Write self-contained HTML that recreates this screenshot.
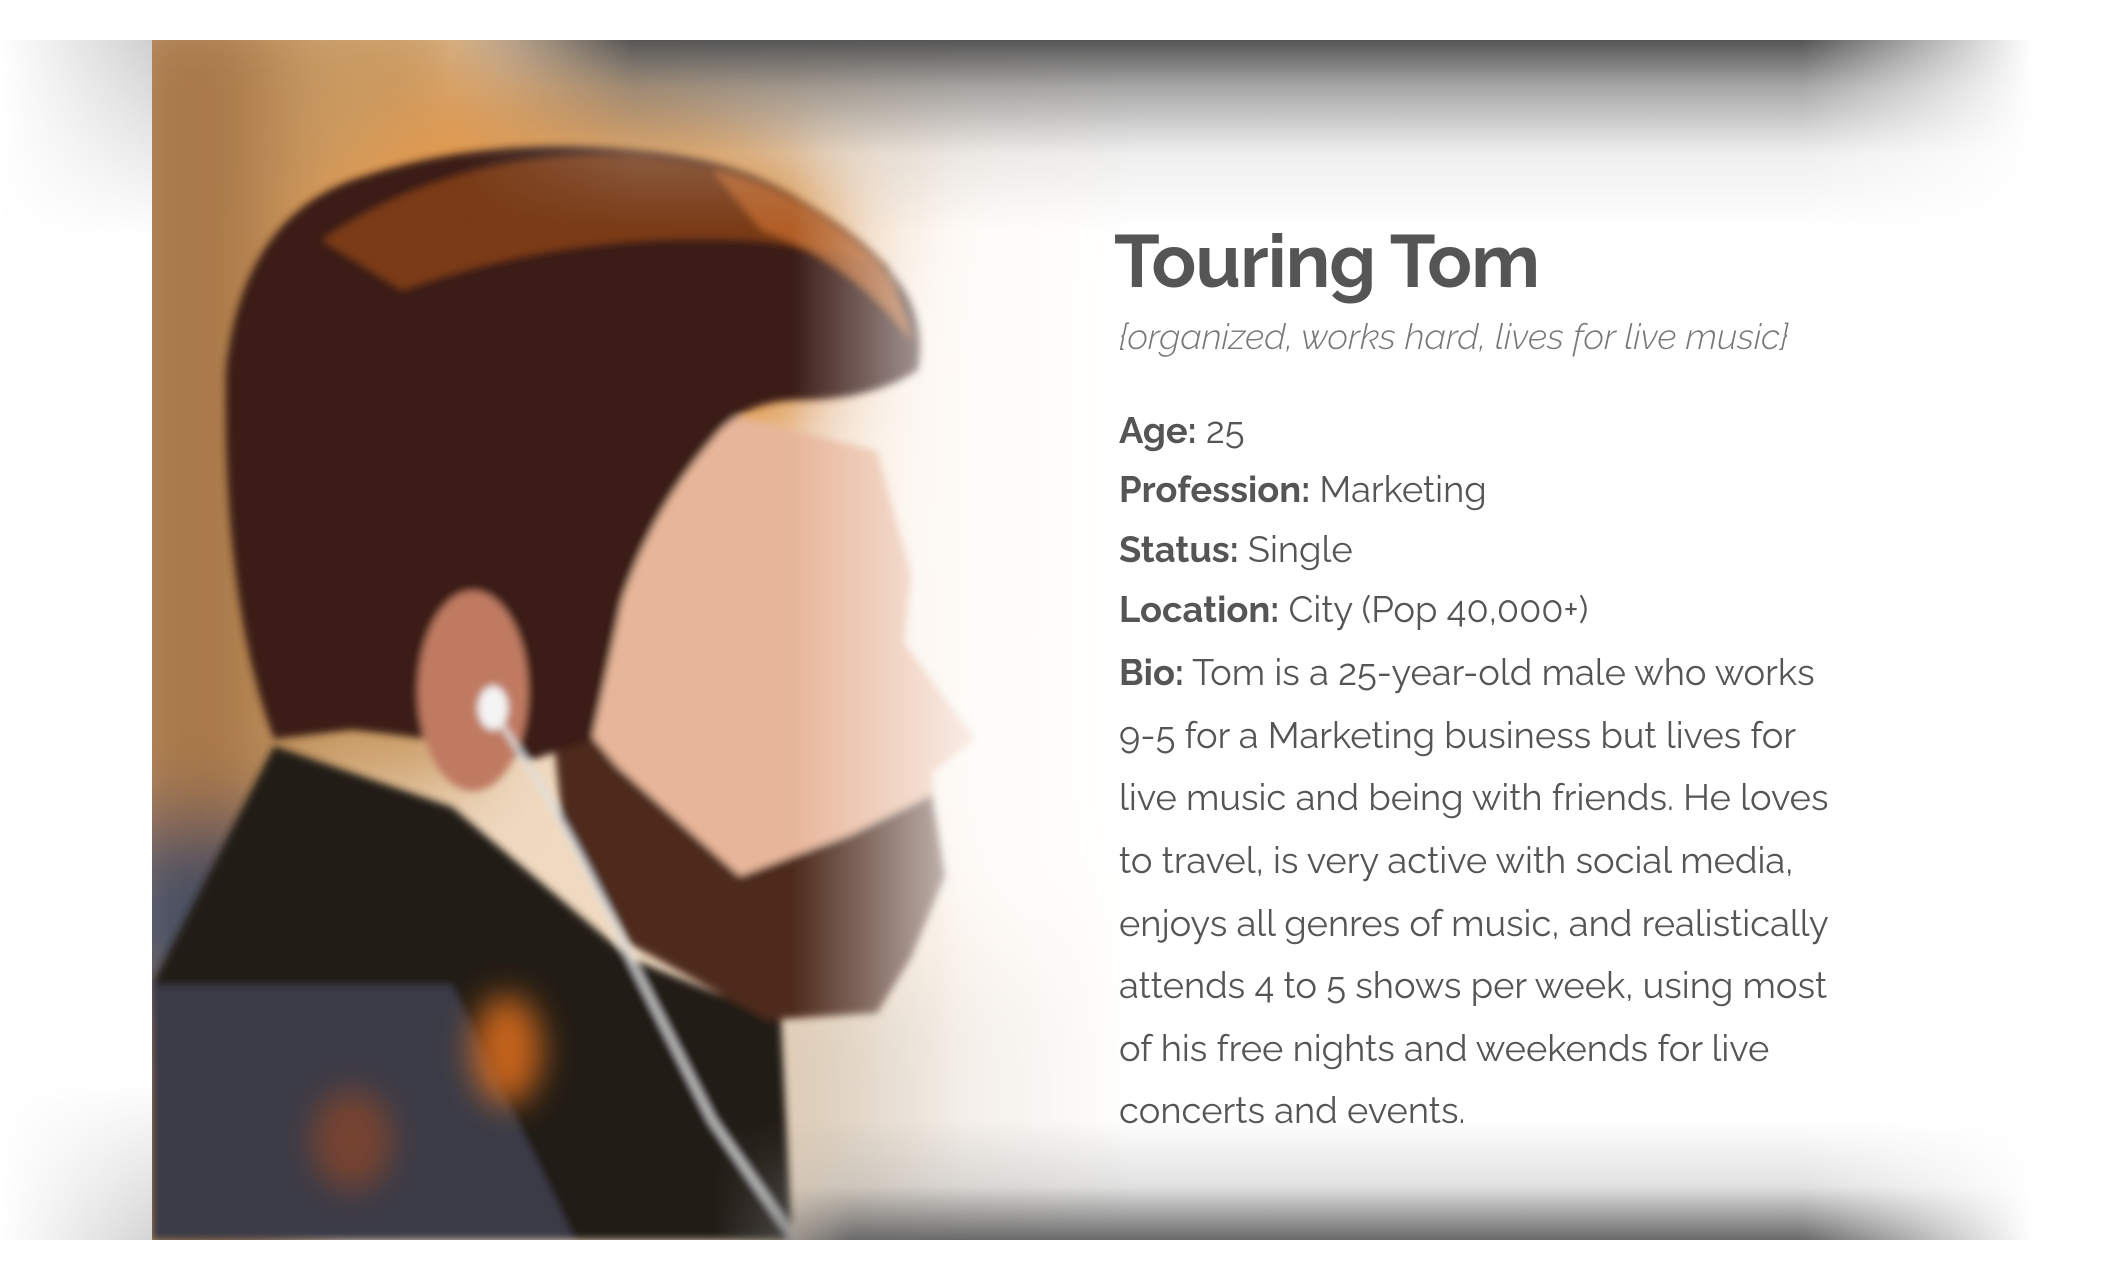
<!DOCTYPE html>
<html><head><meta charset="utf-8"><style>
html,body{margin:0;padding:0;width:2126px;height:1280px;overflow:hidden;background:#fff;font-family:"Raleway","Liberation Sans",sans-serif}
.card{position:absolute;left:152px;top:40px;width:1925px;height:1200px;background:#fff;overflow:hidden}
svg.photo{position:absolute;left:0;top:0}
.shT{position:absolute;left:0;top:0;width:1925px;height:190px;background:linear-gradient(#555 0%,rgba(110,110,110,.6) 25%,rgba(190,190,190,.25) 60%,rgba(255,255,255,0));-webkit-mask-image:linear-gradient(90deg,transparent 0px,transparent 300px,#000 480px,#000 1650px,transparent 1880px)}
.shB{position:absolute;left:0;bottom:0;width:1925px;height:120px;background:linear-gradient(rgba(255,255,255,0),rgba(170,170,170,.35) 55%,#6a6a6a);-webkit-mask-image:linear-gradient(90deg,transparent 0px,transparent 560px,#000 700px,#000 1650px,transparent 1880px)}
.outL{position:absolute;left:0;top:40px;width:152px;height:200px;background:linear-gradient(90deg,rgba(255,255,255,0),rgba(150,150,150,.45));-webkit-mask-image:linear-gradient(#000,transparent)}
.outLB{position:absolute;left:0;top:1080px;width:152px;height:160px;background:linear-gradient(90deg,rgba(255,255,255,0),rgba(150,150,150,.4));-webkit-mask-image:linear-gradient(transparent,#000)}
h1{position:absolute;left:1114px;top:218px;margin:0;font-size:74px;font-weight:bold;color:#555;letter-spacing:-1px}
.sub{position:absolute;left:1119px;top:316px;font-size:36px;font-style:italic;color:#777;font-weight:300}
.l{position:absolute;left:1119px;font-size:36.3px;color:#555;white-space:nowrap}
</style></head><body>
<div class="outL"></div>
<div class="outLB"></div>
<div class="card">
<svg class="photo" width="1925" height="1200" viewBox="0 0 1925 1200">
<defs>
<filter id="b1" x="-50%" y="-50%" width="200%" height="200%"><feGaussianBlur stdDeviation="40"/></filter>
<filter id="b2" x="-100%" y="-100%" width="300%" height="300%"><feGaussianBlur stdDeviation="16"/></filter>
<filter id="b3"><feGaussianBlur stdDeviation="4"/></filter>
<linearGradient id="fade" x1="0" x2="1"><stop offset="0" stop-color="#fff" stop-opacity="0"/><stop offset=".5" stop-color="#fff" stop-opacity="0.7"/><stop offset="1" stop-color="#fff"/></linearGradient>
</defs>
<rect x="0" y="0" width="1300" height="1200" fill="#efd9c0"/>
<g filter="url(#b1)">
<rect x="-50" y="-50" width="200" height="1300" fill="#a8784a"/>
<rect x="120" y="-50" width="200" height="800" fill="#c89a62"/>
<ellipse cx="420" cy="250" rx="280" ry="220" fill="#e09a50"/>
<ellipse cx="880" cy="500" rx="180" ry="400" fill="#fbf1e6"/>
<rect x="620" y="950" width="400" height="300" fill="#d8c8b4"/>
<rect x="-50" y="780" width="200" height="200" fill="#4a5060"/>
</g>
<g filter="url(#b3)">
<path d="M122 706 L300 767 L478 918 L629 980 L640 1200 L0 1200 L0 945 Z" fill="#241a16"/>
<path d="M0 945 L300 945 L423 1200 L0 1200 Z" fill="#3b3a46"/>
<path d="M560 370 L725 411 L759 534 L752 603 L823 699 L780 733 L786 808 L759 918 L670 973 L560 945 L423 808 L396 603 Z" fill="#e7b69a"/>
<path d="M396 644 L465 726 L588 836 L697 795 L780 754 L793 836 L759 918 L725 973 L615 980 L478 904 L410 781 Z" fill="#4e2a1a"/>
<path d="M74 330 Q90 180 200 140 Q330 95 480 110 Q620 120 700 200 Q780 250 766 330 Q720 360 650 360 Q590 360 560 400 Q500 470 470 560 L440 700 L380 720 Q300 700 200 690 L122 699 Q70 560 74 330 Z" fill="#3a1e12"/>
<path d="M170 200 Q300 110 480 115 Q640 125 740 230 Q690 210 600 200 Q420 190 250 250 Z" fill="#7a3a18"/>
<path d="M560 130 Q660 150 740 240 L760 300 Q700 220 610 190 Z" fill="#c0682a" opacity=".8"/>
<ellipse cx="321" cy="651" rx="55" ry="100" fill="#c07a62"/>
<ellipse cx="341" cy="668" rx="15" ry="22" fill="#f4f4f4"/>
<path d="M350 685 Q420 790 471 904 L560 1080 L643 1200" stroke="#e0e0e0" stroke-width="5" fill="none"/>
</g>
<ellipse cx="355" cy="1010" rx="35" ry="55" fill="#e0701c" filter="url(#b2)" opacity=".85"/>
<ellipse cx="200" cy="1100" rx="40" ry="50" fill="#a04a20" filter="url(#b2)" opacity=".6"/>
<rect x="640" y="0" width="340" height="1200" fill="url(#fade)"/>
<rect x="979" y="0" width="1000" height="1200" fill="#fff"/>
</svg>
<div class="shT"></div>
<div class="shB"></div>
</div>
<h1>Touring Tom</h1>
<div class="sub">{organized, works hard, lives for live music}</div>
<div class="l" style="top:410px"><b>Age:</b> 25</div>
<div class="l" style="top:469px"><b>Profession:</b> Marketing</div>
<div class="l" style="top:529px"><b>Status:</b> Single</div>
<div class="l" style="top:589px"><b>Location:</b> City (Pop 40,000+)</div>
<div class="l" style="top:652px"><b>Bio:</b> Tom is a 25-year-old male who works</div>
<div class="l" style="top:715px">9-5 for a Marketing business but lives for</div>
<div class="l" style="top:777px">live music and being with friends. He loves</div>
<div class="l" style="top:840px">to travel, is very active with social media,</div>
<div class="l" style="top:903px">enjoys all genres of music, and realistically</div>
<div class="l" style="top:965px">attends 4 to 5 shows per week, using most</div>
<div class="l" style="top:1028px">of his free nights and weekends for live</div>
<div class="l" style="top:1090px">concerts and events.</div>
</body></html>
